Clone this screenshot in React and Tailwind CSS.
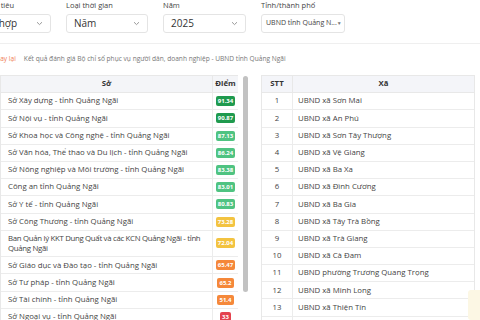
import React from 'react';

const so = [
  { name: 'Sở Xây dựng - tỉnh Quảng Ngãi', score: '91.34', color: 'bg-[#1f9a4e]' },
  { name: 'Sở Nội vụ - tỉnh Quảng Ngãi', score: '90.87', color: 'bg-[#1f9a4e]' },
  { name: 'Sở Khoa học và Công nghệ - tỉnh Quảng Ngãi', score: '87.13', color: 'bg-[#4fc381]' },
  { name: 'Sở Văn hóa, Thể thao và Du lịch - tỉnh Quảng Ngãi', score: '86.24', color: 'bg-[#4fc381]' },
  { name: 'Sở Nông nghiệp và Môi trường - tỉnh Quảng Ngãi', score: '83.38', color: 'bg-[#4fc381]' },
  { name: 'Công an tỉnh Quảng Ngãi', score: '83.01', color: 'bg-[#4fc381]' },
  { name: 'Sở Y tế - tỉnh Quảng Ngãi', score: '80.83', color: 'bg-[#4fc381]' },
  { name: 'Sở Công Thương - tỉnh Quảng Ngãi', score: '73.28', color: 'bg-[#f3c340]' },
  { name: 'Ban Quản lý KKT Dung Quất và các KCN Quảng Ngãi - tỉnh', line2: 'Quảng Ngãi', score: '72.04', color: 'bg-[#f3c340]', tall: true },
  { name: 'Sở Giáo dục và Đào tạo - tỉnh Quảng Ngãi', score: '65.47', color: 'bg-[#f5883a]' },
  { name: 'Sở Tư pháp - tỉnh Quảng Ngãi', score: '65.2', color: 'bg-[#f5883a]' },
  { name: 'Sở Tài chính - tỉnh Quảng Ngãi', score: '51.4', color: 'bg-[#f5883a]' },
  { name: 'Sở Ngoại vụ - tỉnh Quảng Ngãi', score: '33', color: 'bg-[#e4434f]' },
];

const xa = [
  'UBND xã Sơn Mai',
  'UBND xã An Phú',
  'UBND xã Sơn Tây Thượng',
  'UBND xã Vệ Giang',
  'UBND xã Ba Xa',
  'UBND xã Đình Cương',
  'UBND xã Ba Gia',
  'UBND xã Tây Trà Bồng',
  'UBND xã Trà Giang',
  'UBND xã Cà Đam',
  'UBND phường Trương Quang Trọng',
  'UBND xã Minh Long',
  'UBND xã Thiện Tín',
  'UBND xã Bình Minh',
];

function Chevron() {
  return (
    <svg width="7" height="5" viewBox="0 0 7 5" className="text-[#999]">
      <path d="M1 1.2 L3.5 3.6 L6 1.2" fill="none" stroke="currentColor" strokeWidth="1" />
    </svg>
  );
}

function Filter({ label, value, width, extra = '' }) {
  return (
    <div className={`flex flex-col gap-[4px] ${extra}`} style={{ width }}>
      <div className="h-[10px] text-[7.5px] leading-[10px] text-[#444] whitespace-nowrap">{label}</div>
      <div className="h-[19px] flex items-center justify-between pl-[7px] pr-[7px] border border-[#e4e4e4] rounded-[3px] bg-white">
        <span className="text-[10px] text-[#333] whitespace-nowrap">{value}</span>
        <Chevron />
      </div>
    </div>
  );
}

export default function App() {
  return (
    <div className="w-[480px] h-[320px] overflow-hidden bg-white relative text-[#444]" style={{ fontFamily: '"Open Sans", "Noto Sans", sans-serif' }}>
      <div className="flex gap-[15px]">
        <Filter label="Nhóm chỉ tiêu" value="Tổng hợp" width="86px" extra="-ml-[35px]" />
        <Filter label="Loại thời gian" value="Năm" width="82px" />
        <Filter label="Năm" value="2025" width="83px" />
        <div className="flex flex-col gap-[4px] w-[84px]">
          <div className="h-[10px] text-[7.5px] leading-[10px] text-[#444]">Tỉnh/thành phố</div>
          <div className="h-[19px] flex items-center justify-between pl-[4px] pr-[5px] border border-[#e4e4e4] rounded-[3px] bg-white">
            <span className="text-[7px] text-[#444] whitespace-nowrap shrink-0">UBND tỉnh Quảng N...</span>
            <span className="text-[5px] text-[#777] shrink-0">▼</span>
          </div>
        </div>
      </div>

      <div className="mt-[10px] h-px bg-[#efefef]" />

      <div className="flex items-center gap-[8px] h-[12px] mt-[9px] text-[6.6px] whitespace-nowrap -ml-[9px]">
        <span className="text-[#ef7c55]">Quay lại</span>
        <span className="text-[#777]">Kết quả đánh giá Bộ chỉ số phục vụ người dân, doanh nghiệp - UBND tỉnh Quảng Ngãi</span>
      </div>

      <div className="flex mt-[10px]">
        <div className="flex w-[250px]">
          <div className="w-[238px] border-t border-l border-[#e8e8e8] text-[7.8px]">
            <div className="flex h-[17.2px] bg-[#f4f5f8] border-b border-[#e8e8e8] font-bold text-[#333]">
              <div className="w-[212px] flex items-center justify-center border-r border-[#e8e8e8]">Sở</div>
              <div className="flex-1 flex items-center justify-center">Điểm</div>
            </div>
            {so.map((r) => (
              <div key={r.name} className={`flex border-b border-[#ececec] ${r.tall ? 'h-[26.6px]' : 'h-[17.2px]'}`}>
                {r.tall ? (
                  <div className="w-[212px] flex flex-col justify-center pl-[7px] border-r border-[#ececec] leading-[10px] text-[#444] whitespace-nowrap tracking-[-0.3px] overflow-hidden">
                    <span>{r.name}</span>
                    <span>{r.line2}</span>
                  </div>
                ) : (
                  <div className="w-[212px] flex items-center pl-[7px] border-r border-[#ececec] text-[#444] whitespace-nowrap">
                    {r.name}
                  </div>
                )}
                <div className="flex-1 flex items-center justify-center">
                  <span className={`${r.color} text-white font-bold text-[6px] leading-[10px] px-[2px] rounded-[2px]`}>
                    {r.score}
                  </span>
                </div>
              </div>
            ))}
          </div>
          <div className="ml-[5px] mt-px w-[5px] h-[216px] rounded-full bg-[#c2c2c2]" />
        </div>

        <div className="ml-[11px] w-[214px] border-t border-l border-r border-[#e8e8e8] text-[7.8px]">
          <div className="flex h-[17.2px] bg-[#f4f5f9] border-b border-[#e8e8e8] font-bold text-[#333]">
            <div className="w-[31px] flex items-center justify-center border-r border-[#e8e8e8]">STT</div>
            <div className="flex-1 flex items-center justify-center">Xã</div>
          </div>
          {xa.map((n, i) => (
            <div key={n} className="flex h-[17.2px] border-b border-[#ececec] text-[#444]">
              <div className="w-[31px] flex items-center justify-center border-r border-[#ececec]">{i + 1}</div>
              <div className="flex-1 flex items-center pl-[5px] whitespace-nowrap">{n}</div>
            </div>
          ))}
        </div>
      </div>

      <div className="absolute right-0 top-[290px] w-[12px] h-[30px] rounded-l-[3px] bg-[#fcf7e4]" />
    </div>
  );
}
